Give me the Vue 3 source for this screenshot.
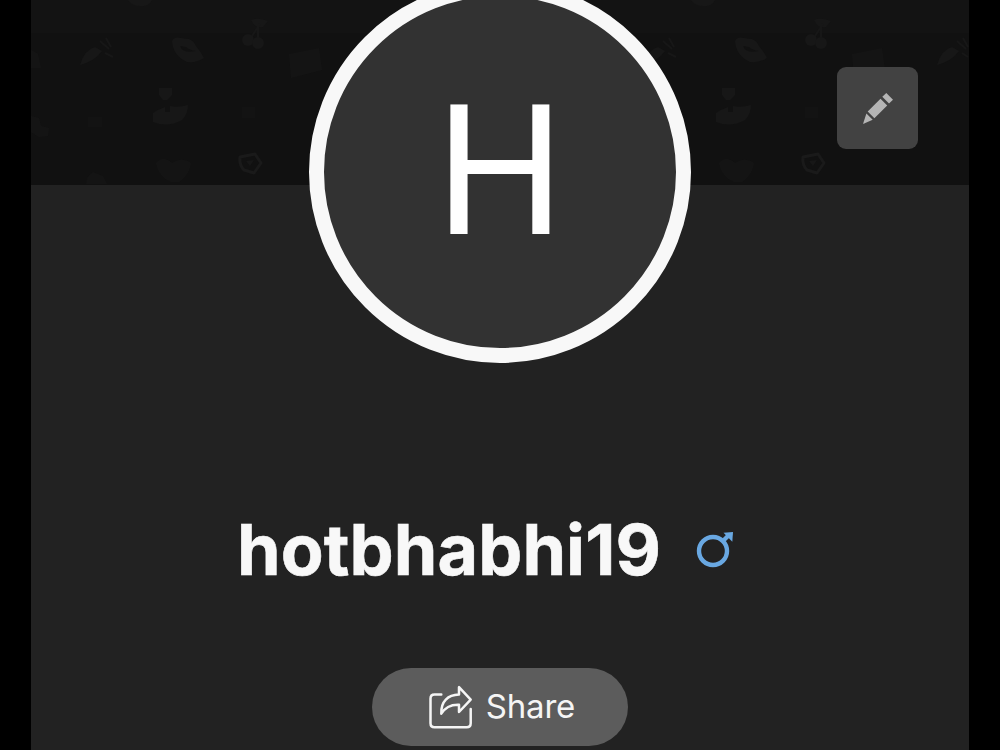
<script setup>
const tiles = [0, 563]
</script>

<template>
  <main class="screen">
    <section class="profile">
      <header class="cover">
        <svg class="pattern" viewBox="0 0 939 184" aria-hidden="true">
          <rect width="939" height="33" fill="#131313" />
          <g v-for="x in tiles" :key="x" :transform="`translate(${x - 31} 0)`" fill="#171717">
            <path d="M128 0h24q-3 7-12 6-8 0-12-6z" />
            <path d="M80 65q4-15 15-18l7 4q-7 10-22 14z" />
            <path d="M100 41l9 8M106 38l5 9M105 53l8 4" stroke="#171717" stroke-width="2" />
            <path fill-rule="evenodd" d="M172 41q2-5 9-3 5 1 8 1 5 2 7 7 5 6 8 12-7 5-17 4-14-6-15-21zM180 46q3 8 16 5-7-1-10-4z" />
            <path d="M251 20q7-3 17 1l-5 6q-8 2-12-7z" />
            <path d="M260 24l-10 15m8-15v15" fill="none" stroke="#171717" stroke-width="2" />
            <circle cx="248" cy="40" r="6" /><circle cx="258" cy="43" r="6" />
            <path d="M289 54l30-6 3 22-31 8z" opacity=".6" />
            <path d="M159 88h13v7l-5 5h-4l-4-5zM153 113q6-4 12-6v5h5v-6q7 2 18-1 0 9-6 15-14 8-29 2z" />
            <path d="M88 117h14v10H88zM242 107h13v11h-13z" opacity=".4" />
            <path d="M156 163q7-8 16 0 10-7 19 0-1 11-12 19h-8q-13-6-15-19z" opacity=".6" />
            <path fill="none" stroke="#1a1a1a" stroke-width="3" stroke-linejoin="round" d="M240 157l15-3 6 9-7 10-10-3q-5-5-4-13z" />
            <path d="M246 161l8-1-4 6z" />
            <path d="M86 184q1-9 7-12l10 4 4 8z" opacity=".5" />
            <path d="M31 50l7 4 3 14H31zM31 116l8 2 2 8 8 2-1 8-9 1-8-5z" opacity=".6" />
          </g>
          <g transform="translate(849 0)" fill="#171717">
            <path d="M57 65q4-15 15-18l7 4q-7 10-22 14z" />
            <path d="M77 41l9 8M83 38l5 9M82 53l6 4" stroke="#171717" stroke-width="2" />
          </g>
        </svg>
        <button class="edit" aria-label="Edit profile">
          <svg width="32" height="32" viewBox="0 0 32 32" fill="#b5b5b5">
            <path d="M24.3 1L31 7.7 27 11.5 20.3 4.8zM18.5 6.8L25.2 13.4 12.4 26.3 5.7 19.5zM4.4 21.4L10.7 27.8 1 32z" />
          </svg>
        </button>
      </header>

      <div class="avatar"><span>H</span></div>

      <div class="identity">
        <h1>hotbhabhi19</h1>
        <svg class="gender" width="40" height="40" viewBox="0 0 40 40" aria-label="Male">
          <circle cx="18" cy="23" r="14" fill="none" stroke="#69a8e2" stroke-width="4.4" />
          <path d="M27.7 13.3L34 7" stroke="#69a8e2" stroke-width="4.4" />
          <path d="M28.5 4.7L38 4 37.3 13.8z" fill="#69a8e2" />
        </svg>
      </div>

      <button class="share">
        <svg width="46" height="46" viewBox="0 0 46 46" fill="none" stroke="#f5f5f5" stroke-width="2.5" stroke-linejoin="round" stroke-linecap="round">
          <path d="M13.3 9.4H6.5Q2.5 9.4 2.5 13.4V38.2Q2.5 42.2 6.5 42.2H38.7Q42.7 42.2 42.7 38.2V24" />
          <path d="M31 2.2V9.6C20 10 12.8 16 13.3 28.7Q19 19.2 31 19.7V27L42.7 14.7z" />
        </svg>
        <span>Share</span>
      </button>
    </section>
  </main>
</template>

<style>
body { background: #000; overflow: hidden; }
</style>

<style scoped>
.screen { height: 750px; padding: 0 31px; box-sizing: border-box; overflow: hidden; background: #000; }
.profile { height: 750px; background: #222; display: flex; flex-direction: column; align-items: center; overflow: hidden; }
.cover { position: relative; width: 938px; height: 185px; flex: none; background: #111; overflow: hidden; }
.pattern { position: absolute; left: 0; top: 0; width: 939px; height: 184px; }
.edit { position: absolute; right: 51px; top: 67px; width: 81px; height: 81.5px; padding: 0; border: 0; border-radius: 9px; background: #424242; display: flex; align-items: center; justify-content: center; }
.avatar { position: relative; box-sizing: border-box; flex: none; width: 382px; height: 382px; margin-top: -204.5px; border: 15px solid #f8f8f8; border-radius: 50%; background: #323232; display: flex; align-items: center; justify-content: center; color: #fff; font: 400 181px/1 Roboto, sans-serif; }
.avatar span { padding: 2px 0 0; }
.identity { display: flex; align-items: center; gap: 34px; height: 84px; margin: 145.5px 28px 0 0; }
h1 { margin: 0; color: #f8f8f8; font: 700 70px/84px Inter, sans-serif; letter-spacing: .1px; -webkit-text-stroke: .6px #f8f8f8; white-space: nowrap; }
.gender { margin-top: -4px; }
.share { flex: none; box-sizing: border-box; width: 256px; height: 78px; margin-top: 76px; padding: 0 0 0 3px; border: 0; border-radius: 39px; background: #5c5c5c; color: #f5f5f5; display: flex; align-items: center; justify-content: center; gap: 12px; font: 400 33px/40px Inter, sans-serif; letter-spacing: -.2px; }
.share svg { position: relative; top: 1px; }
.share span { margin-top: -2px; }
</style>
